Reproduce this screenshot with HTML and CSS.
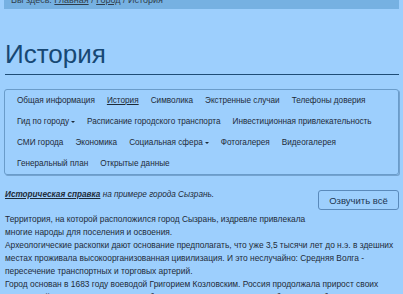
FILE: index.html
```html
<!DOCTYPE html>
<html lang="ru">
<head>
    <meta charset="UTF-8" />
    <meta name="viewport" content="width=device-width, initial-scale=1" />
    <title>История</title>
    <link rel="stylesheet" href="styles.css">
</head>
<body>
<div class="page">
    <div class="breadcrumbs">
        <span class="crumbs-text">Вы здесь: <a href="#">Главная</a> / <a href="#">Город</a> / История</span>
    </div>

    <h1 class="title">История</h1>

    <ul class="subnav">
        <li><a href="#">Общая информация</a></li>
        <li><a href="#" class="active">История</a></li>
        <li><a href="#">Символика</a></li>
        <li><a href="#">Экстренные случаи</a></li>
        <li><a href="#">Телефоны доверия</a></li>
        <li><a href="#">Гид по городу<span class="caret"></span></a></li>
        <li><a href="#">Расписание городского транспорта</a></li>
        <li><a href="#">Инвестиционная привлекательность</a></li>
        <li><a href="#">СМИ города</a></li>
        <li><a href="#">Экономика</a></li>
        <li><a href="#">Социальная сфера<span class="caret"></span></a></li>
        <li><a href="#">Фотогалерея</a></li>
        <li><a href="#">Видеогалерея</a></li>
        <li><a href="#">Генеральный план</a></li>
        <li><a href="#">Открытые данные</a></li>
    </ul>

    <div class="intro">
        <p class="lead"><a href="#">Историческая справка</a> на примере города Сызрань.</p>
        <button class="speak-btn" type="button">Озвучить всё</button>
    </div>

    <div class="article">
        Территория, на которой расположился город Сызрань, издревле привлекала<br>
        многие народы для поселения и освоения.<br>
        Археологические раскопки дают основание предполагать, что уже 3,5 тысячи лет до н.э. в здешних<br>
        местах проживала высокоорганизованная цивилизация. И это неслучайно: Средняя Волга -<br>
        пересечение транспортных и торговых артерий.<br>
        Город основан в 1683 году воеводой Григорием Козловским. Россия продолжала прирост своих<br>
        территорий на Востоке, и потому требовались города-крепости для обеспечения безопасности
    </div>
</div>
</body>
</html>
```

FILE: styles.css
```css
body {
    margin: 0;
    padding: 0;
    background-color: #9dcffd;
    font-family: "Liberation Sans", Arial, sans-serif;
    color: #1d2b39;
    overflow: hidden;
}
.page {
    width: 395px;
    margin-left: 4px;
}
.breadcrumbs {
    height: 9px;
    overflow: hidden;
    background-color: #76b1e2;
    padding-left: 7px;
    font-size: 9px;
    color: #2f3d4b;
}
.crumbs-text {
    display: block;
    margin-top: -5px;
    line-height: 10px;
}
.breadcrumbs a {
    color: #2f3d4b;
}
.title {
    margin: 32px 0 0 1px;
    padding-bottom: 7px;
    font-size: 26px;
    line-height: 26px;
    font-weight: normal;
    color: #174874;
    border-bottom: 1px solid #1f4d76;
}
.subnav {
    list-style: none;
    margin: 14px 0 0;
    padding: 0 6px;
    display: flex;
    flex-wrap: wrap;
    border: 1px solid #6a9cca;
    border-radius: 3px;
    box-shadow: 1px 1px 0 rgba(40, 80, 120, 0.35);
}
.subnav li a {
    display: block;
    padding: 0 6px;
    line-height: 21px;
    font-size: 8.2px;
    color: #1d2b39;
    text-decoration: none;
}
.subnav li a.active {
    text-decoration: underline;
}
.caret {
    display: inline-block;
    margin-left: 2px;
    vertical-align: middle;
    border-top: 2px solid #1d2b39;
    border-left: 2px solid transparent;
    border-right: 2px solid transparent;
}
.intro {
    display: flex;
    justify-content: space-between;
    align-items: flex-start;
    margin-top: 13px;
}
.lead {
    margin: 0 0 0 1px;
    font-size: 8.2px;
    line-height: 13px;
    font-style: italic;
}
.lead a {
    font-weight: bold;
    color: #1d2b39;
}
.speak-btn {
    margin-top: 2px;
    width: 81px;
    height: 20px;
    padding: 0;
    font-family: "Liberation Sans", Arial, sans-serif;
    font-size: 9.5px;
    color: #1c3550;
    background-color: #9dcffd;
    border: 1px solid #5a8abb;
    border-radius: 3px;
}
.article {
    margin: 3px 0 0 1px;
    font-size: 8.4px;
    line-height: 13px;
    white-space: nowrap;
}
```
